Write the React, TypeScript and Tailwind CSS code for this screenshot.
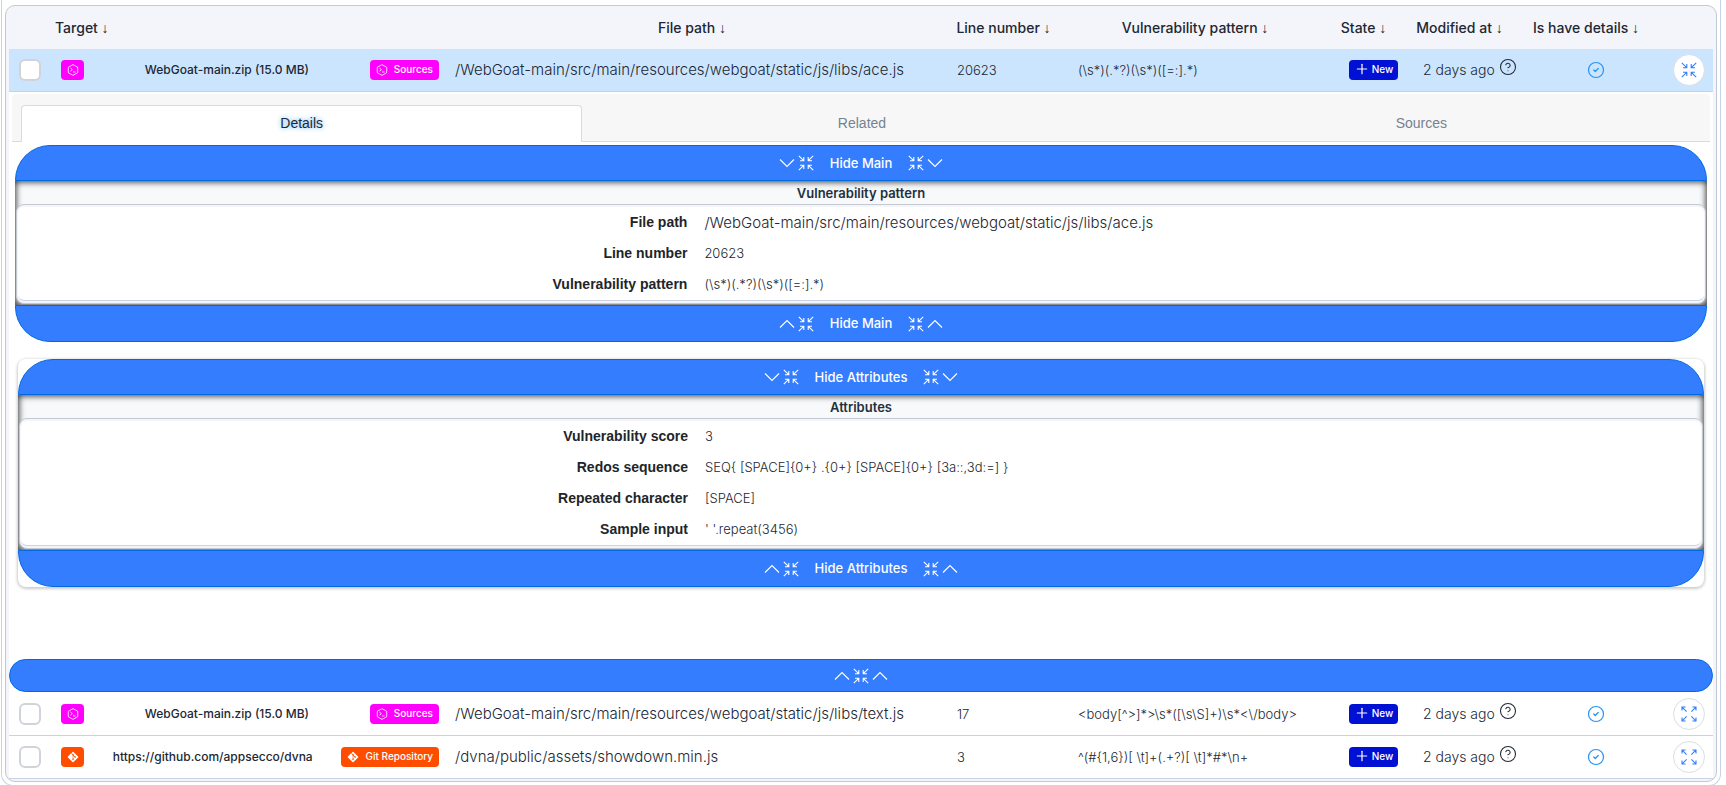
import type { ReactNode } from "react"
import { CircleCheck, CircleQuestionMark, Plus } from "lucide-react"
import { FaGitAlt } from "react-icons/fa"

type Finding = {
  id: string
  target: string
  source: "sources" | "git"
  path: string
  line: number
  pattern: string
  open?: boolean
}

const findings: Finding[] = [
  {
    id: "ace",
    target: "WebGoat-main.zip (15.0 MB)",
    source: "sources",
    path: "/WebGoat-main/src/main/resources/webgoat/static/js/libs/ace.js",
    line: 20623,
    pattern: "(\\s*)(.*?)(\\s*)([=:].*)",
    open: true
  },
  {
    id: "text",
    target: "WebGoat-main.zip (15.0 MB)",
    source: "sources",
    path: "/WebGoat-main/src/main/resources/webgoat/static/js/libs/text.js",
    line: 17,
    pattern: "<body[^>]*>\\s*([\\s\\S]+)\\s*<\\/body>"
  },
  {
    id: "showdown",
    target: "https://github.com/appsecco/dvna",
    source: "git",
    path: "/dvna/public/assets/showdown.min.js",
    line: 3,
    pattern: "^(#{1,6})[ \\t]+(.+?)[ \\t]*#*\\n+"
  }
]

const mainFields = [
  ["File path", "/WebGoat-main/src/main/resources/webgoat/static/js/libs/ace.js"],
  ["Line number", "20623"],
  ["Vulnerability pattern", "(\\s*)(.*?)(\\s*)([=:].*)"]
]

const attributeFields = [
  ["Vulnerability score", "3"],
  ["Redos sequence", "SEQ{ [SPACE]{0+} .{0+} [SPACE]{0+} [3a::,3d:=] }"],
  ["Repeated character", "[SPACE]"],
  ["Sample input", "' '.repeat(3456)"]
]

function CollapseIcon() {
  return (
    <svg viewBox="0 0 16 16" className="h-4 w-4 shrink-0" fill="none" stroke="currentColor" strokeWidth="1.1" aria-hidden="true">
      <path d="M.8.8l4.4 4.4M5.8 2v3.8H2M15.2.8l-4.4 4.4M10.2 2v3.8H14M.8 15.2l4.4-4.4M2 10.2h3.8V14M15.2 15.2l-4.4-4.4M14 10.2h-3.8V14" />
    </svg>
  )
}

function ExpandIcon() {
  return (
    <svg viewBox="0 0 16 16" className="h-4 w-4 shrink-0" fill="none" stroke="currentColor" strokeWidth="1.1" aria-hidden="true">
      <path d="M5.6 5.6L1.4 1.4M1 4.6V1h3.6M10.4 5.6l4.2-4.2M11.4 1H15v3.6M5.6 10.4l-4.2 4.2M1 11.4V15h3.6M10.4 10.4l4.2 4.2M15 11.4V15h-3.6" />
    </svg>
  )
}

function Chevron({ up }: { up?: boolean }) {
  return (
    <svg viewBox="0 0 16 16" className="h-4 w-4 shrink-0" fill="none" stroke="currentColor" strokeWidth="1.1" aria-hidden="true">
      <path d={up ? "M1 11.5l7-7 7 7" : "M1 4.5l7 7 7-7"} />
    </svg>
  )
}

function SourcesIcon() {
  return (
    <svg viewBox="0 0 16 16" className="h-3 w-3 shrink-0" fill="none" stroke="currentColor" strokeWidth="1.1" aria-hidden="true">
      <path d="M8 .8l6.3 3.6v7.2L8 15.2l-6.3-3.6V4.4z" />
      <path d="M4.6 5.4l2.6 2.2-2.6 2.2M8 10.6h3.4" />
    </svg>
  )
}

function SourceIcon({ source }: { source: Finding["source"] }) {
  return source === "git" ? <FaGitAlt className="h-3 w-3 shrink-0" /> : <SourcesIcon />
}

function HeaderCell({ children, className = "text-center" }: { children: ReactNode; className?: string }) {
  return (
    <th scope="col" className={`h-[43px] p-0 font-medium whitespace-nowrap ${className}`}>
      {children} <span className="font-['Liberation_Sans',sans-serif] font-normal">↓</span>
    </th>
  )
}

function FindingRow({ finding }: { finding: Finding }) {
  const color = finding.source === "git" ? "bg-[#ff4d00]" : "bg-[#ff00ff]"
  const cell = "h-[43px] border-b border-[#c8d3e8] p-0"

  return (
    <tr className={finding.open ? "bg-[#cce5ff]" : "bg-white"}>
      <td className={cell}>
        <input
          type="checkbox"
          aria-label={`Select ${finding.path}`}
          className="ml-2.5 block h-[22px] w-[22px] appearance-none rounded-md border-2 border-[#d0d4da] bg-white"
        />
      </td>
      <td className={cell}>
        <div className="flex items-center pr-2 pl-3">
          <span className={`flex h-5 w-[23px] shrink-0 items-center justify-center rounded text-white ${color}`}>
            <SourceIcon source={finding.source} />
          </span>
          <div className="flex flex-1 items-center">
            <span className="flex-1 text-center text-xs font-medium whitespace-nowrap">{finding.target}</span>
            <span className={`flex h-5 items-center gap-1.5 rounded px-1.5 text-[10px] font-medium text-white ${color}`}>
              <SourceIcon source={finding.source} />
              <span className="pb-0.5">{finding.source === "git" ? "Git Repository" : "Sources"}</span>
            </span>
          </div>
        </div>
      </td>
      <td className={`${cell} pl-2 text-[15px] font-light whitespace-nowrap`}>{finding.path}</td>
      <td className={`${cell} pl-5 text-[13px] font-light`}>{finding.line}</td>
      <td className={`${cell} pl-2 text-[13px] font-light whitespace-nowrap`}>{finding.pattern}</td>
      <td className={cell}>
        <span className="mr-[9px] ml-auto flex h-5 w-[49px] items-center justify-center gap-0.5 rounded bg-[#0011d4] text-[10px] font-medium text-white">
          <Plus className="mb-0.5 h-4 w-4" strokeWidth={1.8} />
          <span className="pb-0.5">New</span>
        </span>
      </td>
      <td className={`${cell} pl-4 font-light whitespace-nowrap`}>
        <div className="flex items-center gap-1">
          2 days ago
          <CircleQuestionMark className="mb-1.5 h-[18px] w-[18px]" strokeWidth={1.4} />
        </div>
      </td>
      <td className={`${cell} pl-5`}>
        <CircleCheck className="mx-auto h-[18px] w-[18px] text-[#2492f5]" strokeWidth={1.6} />
      </td>
      <td className={`${cell} pr-2`}>
        <button
          type="button"
          aria-label={finding.open ? "Collapse row" : "Expand row"}
          className="ml-auto flex h-8 w-8 items-center justify-center rounded-full border border-[#d8dfe6] bg-white text-[#357dff]"
        >
          {finding.open ? <CollapseIcon /> : <ExpandIcon />}
        </button>
      </td>
    </tr>
  )
}

function ToggleBar({ label, up }: { label: string; up?: boolean }) {
  return (
    <button
      type="button"
      className={`flex w-full items-center justify-center gap-4 border border-[#0069e0] bg-[#357dff] text-[13px] font-medium text-white ${
        up ? "h-[37px] rounded-b-[35px]" : "h-9 rounded-t-[35px]"
      }`}
    >
      <span className="flex gap-[3px]">
        <Chevron up={up} />
        <CollapseIcon />
      </span>
      {label}
      <span className="flex gap-[3px]">
        <CollapseIcon />
        <Chevron up={up} />
      </span>
    </button>
  )
}

function Section({ label, title, fields }: { label: string; title: string; fields: string[][] }) {
  return (
    <section>
      <ToggleBar label={label} />
      <div className="bg-[#f7f9fb] px-px pb-px shadow-[inset_0_0_6px_1px_#333]">
        <h3 className="pt-px text-center text-[13px] leading-[22px] font-semibold text-[#22303c]">{title}</h3>
        <div className="rounded-lg border border-[#c4c8d0] bg-[#f4f5fa] px-px py-0.5">
          <table className="w-full table-fixed border-separate border-spacing-0 rounded-md border-b border-[#c8d3e8] bg-white">
            <tbody>
              {fields.map(([name, value]) => (
                <tr key={name}>
                  <th scope="row" className="h-[31px] w-2/5 p-0 pr-[5px] pb-0.5 text-right font-['Liberation_Sans',sans-serif] font-bold text-[#212529]">
                    {name}
                  </th>
                  <td className={`p-0 pl-3 font-light ${name === "File path" ? "text-[15px]" : "text-[13px]"}`}>{value}</td>
                </tr>
              ))}
            </tbody>
          </table>
        </div>
      </div>
      <ToggleBar label={label} up />
    </section>
  )
}

function Details() {
  const tab = "h-[37px] flex-1 pb-0.5 text-[#768192]"

  return (
    <div className="pb-px">
      <div className="px-[3px] pt-0.5">
        <div role="tablist" className="flex rounded-t bg-[#f7f7f7] px-[9px] pt-[11px] font-['Liberation_Sans',sans-serif] shadow-[inset_0_-1px_0_#d8dbe0]">
          <button
            type="button"
            role="tab"
            aria-selected="true"
            className="h-[37px] flex-1 rounded-t border border-b-0 border-[#d8dbe0] bg-white pb-0.5 text-[#1c2a36] [text-shadow:0_0_5px_#4aa8f5]"
          >
            Details
          </button>
          <button type="button" role="tab" aria-selected="false" className={tab}>Related</button>
          <button type="button" role="tab" aria-selected="false" className={tab}>Sources</button>
        </div>
      </div>
      <div className="px-1.5 pt-[3px]">
        <Section label="Hide Main" title="Vulnerability pattern" fields={mainFields} />
      </div>
      <div className="mx-[9px] mt-[17px] rounded-lg shadow-[0_1px_3px_1px_#00000033]">
        <Section label="Hide Attributes" title="Attributes" fields={attributeFields} />
      </div>
      <button
        type="button"
        aria-label="Collapse details"
        className="mt-[72px] flex h-[33px] w-full items-center justify-center gap-[3px] rounded-full border border-[#0069e0] bg-[#357dff] text-white"
      >
        <Chevron up />
        <CollapseIcon />
        <Chevron up />
      </button>
    </div>
  )
}

export default function App() {
  const [opened, ...rest] = findings

  return (
    <div className="overflow-hidden bg-white font-['Inter',sans-serif] text-sm text-[#212733]">
      <div className="mr-[5px] -mb-px ml-px rounded-b-xl border-x border-b border-[#c8d3e8] px-[3px] pt-[5px] pb-[3px]">
        <div className="rounded-[10px] border border-[#c4c8d0] bg-[#f4f5fa] px-[3px] pb-0.5">
          <table className="w-full table-fixed border-separate border-spacing-0">
            <colgroup>
              <col className="w-10" />
              <col className="w-[398px]" />
              <col />
              <col className="w-[133px]" />
              <col className="w-[250px]" />
              <col className="w-[87px]" />
              <col className="w-[113px]" />
              <col className="w-[132px]" />
              <col className="w-[61px]" />
            </colgroup>
            <thead>
              <tr>
                <td />
                <HeaderCell className="pl-1.5 text-left">Target</HeaderCell>
                <HeaderCell>File path</HeaderCell>
                <HeaderCell>Line number</HeaderCell>
                <HeaderCell>Vulnerability pattern</HeaderCell>
                <HeaderCell>State</HeaderCell>
                <HeaderCell className="pr-2 text-center">Modified at</HeaderCell>
                <HeaderCell>Is have details</HeaderCell>
                <td />
              </tr>
            </thead>
            <tbody>
              <FindingRow finding={opened} />
              <tr>
                <td colSpan={9} className="bg-white p-0">
                  <Details />
                </td>
              </tr>
              {rest.map((finding) => (
                <FindingRow key={finding.id} finding={finding} />
              ))}
            </tbody>
          </table>
        </div>
      </div>
    </div>
  )
}
